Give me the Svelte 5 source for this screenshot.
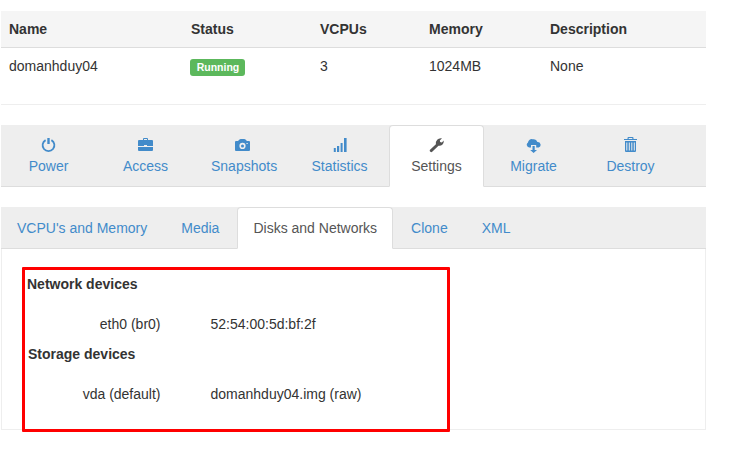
<script>
  const columns = ['Name', 'Status', 'VCPUs', 'Memory', 'Description'];
  const actions = ['Power', 'Access', 'Snapshots', 'Statistics', 'Settings', 'Migrate', 'Destroy'];
  const tabs = ["VCPU's and Memory", 'Media', 'Disks and Networks', 'Clone', 'XML'];
</script>

<main>
  <div class="table">
    <div class="row head">
      {#each columns as column}<b>{column}</b>{/each}
    </div>
    <div class="row body">
      <span>domanhduy04</span>
      <span><strong class="label">Running</strong></span>
      <span>3</span>
      <span>1024MB</span>
      <span>None</span>
    </div>
  </div>

  <nav class="actions">
    {#each actions as name}
      <div class="tab" class:active={name === 'Settings'}>
        <svg width="15" height="16" viewBox="0 0 15 16" fill="currentColor">
          {#if name === 'Power'}
            <path d="M4.6 3.1A5.9 5.9 0 1 0 10.4 3.1" fill="none" stroke="currentColor" stroke-width="1.8" />
            <path d="M6.3 1h2.4v6H6.3z" />
          {:else if name === 'Access'}
            <path fill-rule="evenodd" d="M5 3V2q0-1 1-1h3q1 0 1 1v1h4q1 0 1 1v5H9V8H6v1H0V4q0-1 1-1zM6 3h3V2H6zM0 10h15v3q0 1-1 1H1q-1 0-1-1z" />
          {:else if name === 'Snapshots'}
            <path fill-rule="evenodd" d="M1 4h2l1.5-1.5q.5-.6 1.2-.6h3.6q.7 0 1.2.6L12 4h2q1 0 1 1v8q0 1-1 1H1q-1 0-1-1V5q0-1 1-1zm6.5 1.8a3.1 3.1 0 1 0 0 6.2 3.1 3.1 0 0 0 0-6.2zm4 .2v1h1.2V6z" />
            <circle cx="7.5" cy="8.9" r="1.5" />
          {:else if name === 'Statistics'}
            <path d="M1.8 11h2v4h-2zM5 9h2.2v6H5zM8.6 6h2v9h-2zM12 1h2.6v14H12z" />
          {:else if name === 'Settings'}
            <path d="M.8 13.1 6.9 7.2Q6.5 4.5 8.2 2.7 10 .8 13 1.3L10.8 3.5l.4 1.6 1.6.4 2-1.9q.2 2.5-1.5 4.1-1.6 1.5-3.8 1L3.2 14.8q-.9.8-1.8 0-1-.8-.6-1.7z" />
          {:else if name === 'Migrate'}
            <path d="M3.2 10.5A2.8 2.8 0 0 1 2 5.4 3.6 3.6 0 0 1 6.8 2.3 4 4 0 0 1 11.4 4.9a2.9 2.9 0 0 1 1.3 5.6H10.2V8H5v2.5z" />
            <path d="M6.5 9h2.2v4h2.3L7.6 16 4.2 13h2.3z" />
          {:else}
            <path fill-rule="evenodd" d="M4.5 2V1q0-1 1-1h4q1 0 1 1v1H14v1H1V2zM5.7 2h3.6V1H5.7zM2 4h11v10q0 1-1 1H3q-1 0-1-1zm1.3 1.5v8h1v-8zm2.5 0v8h1v-8zm2.5 0v8h1v-8zm2.5 0v8h1v-8z" />
          {/if}
        </svg>
        <span>{name}</span>
      </div>
    {/each}
  </nav>

  <nav class="sections">
    {#each tabs as name}
      <div class="tab" class:active={name === 'Disks and Networks'}>{name}</div>
    {/each}
  </nav>

  <section>
    <h2>Network devices</h2>
    <div class="device"><span>eth0 (br0)</span><span>52:54:00:5d:bf:2f</span></div>
    <h2 class="storage">Storage devices</h2>
    <div class="device"><span>vda (default)</span><span>domanhduy04.img (raw)</span></div>
    <div class="highlight"></div>
  </section>
</main>

<style>
  :global(body) { margin: 0; background: #fff; }
  main {
    box-sizing: border-box;
    width: 706px;
    height: 464px;
    padding: 11px 0 0 1px;
    font: 14px/20px "Liberation Sans", Arial, sans-serif;
    color: #333;
  }
  .row {
    display: grid;
    grid-template-columns: 181px 130px 109px 121px 1fr;
    padding: 8px;
  }
  .head { background: #f5f5f5; border-bottom: 1px solid #ddd; }
  .head b:nth-child(2) { padding-left: 1px; }
  .body { height: 40px; border-bottom: 1px solid #eee; }
  .label {
    display: block;
    box-sizing: border-box;
    width: 55px;
    height: 17px;
    margin-top: 3px;
    padding-left: 1px;
    border-radius: 3px;
    background: #5cb85c;
    color: #fff;
    font-size: 10.5px;
    line-height: 17px;
    text-align: center;
  }
  nav {
    display: flex;
    gap: 2px;
    box-sizing: border-box;
    margin-top: 20px;
    background: #eee;
    border-bottom: 1px solid #ddd;
    color: #428bca;
  }
  .tab {
    box-sizing: border-box;
    padding: 10px 15px;
    margin-bottom: -1px;
    border: 1px solid transparent;
    border-radius: 4px 4px 0 0;
    white-space: nowrap;
  }
  .active { background: #fff; border-color: #ddd #ddd #fff; color: #555; }
  .actions { height: 62px; }
  .actions .tab { width: 95px; height: 62px; text-align: center; }
  .actions .tab span { display: block; }
  svg { display: block; margin: 1px auto 3px; }
  .sections { height: 42px; }
  .sections .tab { height: 42px; }
  section {
    position: relative;
    box-sizing: border-box;
    height: 181px;
    padding: 25px;
    border: 1px solid #eee;
    border-top: 0;
  }
  h2 { margin: 0 0 20px; font-size: 14px; line-height: 20px; }
  .storage { margin-top: 10px; padding-left: 1px; }
  .device {
    display: grid;
    grid-template-columns: 133.5px 1fr;
    gap: 50px;
  }
  .device span:first-child { text-align: right; }
  .highlight {
    position: absolute;
    box-sizing: border-box;
    left: 20px;
    top: 18px;
    width: 428px;
    height: 165px;
    border: 3px solid #f00;
    border-radius: 1px;
  }
</style>
